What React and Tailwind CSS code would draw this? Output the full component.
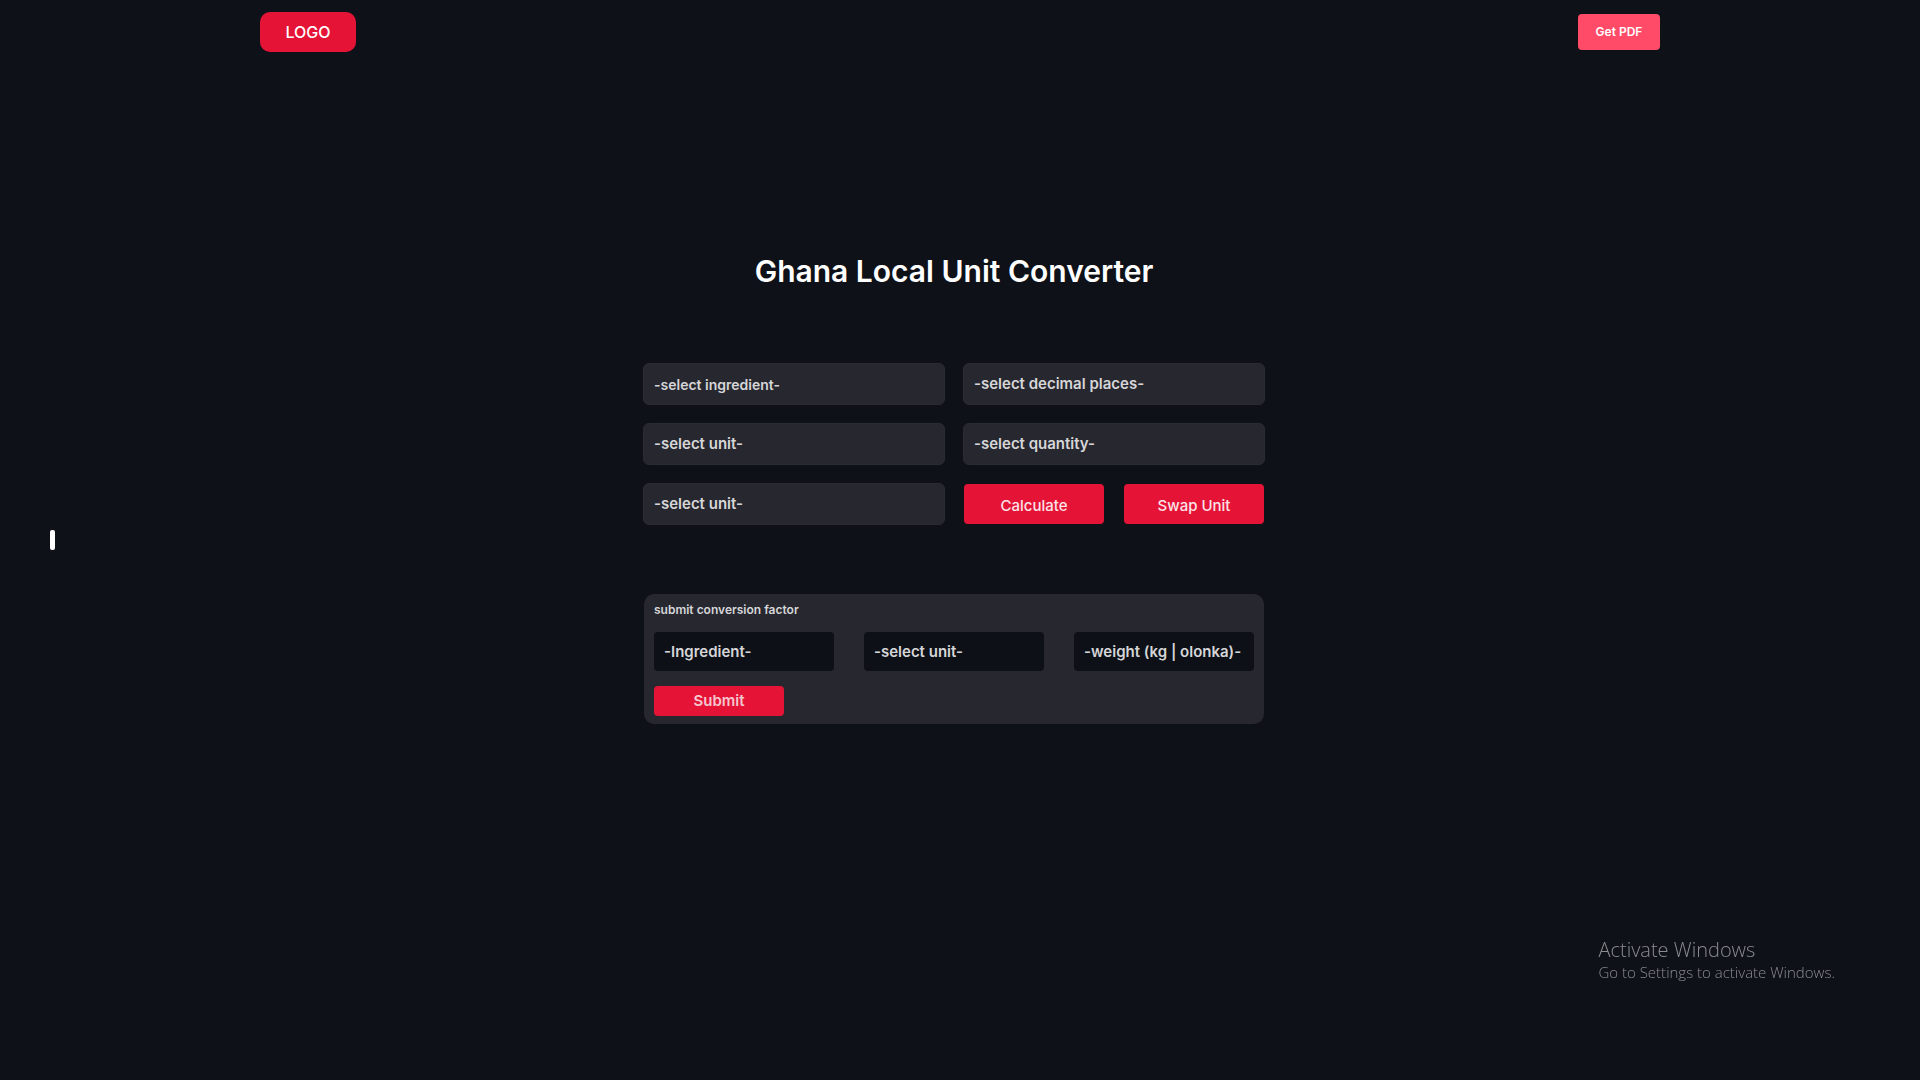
const fieldClass =
  "h-[42px] w-full appearance-none rounded-md border border-[#2b2b33] bg-[#27272f] px-2.5 font-semibold text-[#d6d6d8] outline-none";
const factorClass =
  "h-[39px] min-w-0 appearance-none rounded bg-[#0d1017] px-2.5 text-[15px] font-semibold text-[#d6d6d8] placeholder-[#d6d6d8] outline-none";

function Field({ label, small }) {
  return (
    <select aria-label={label} className={`${fieldClass} ${small ? "pt-px text-[14px]" : "text-[15px]"}`}>
      <option>{label}</option>
    </select>
  );
}

function ActionButton({ children }) {
  return (
    <button type="button" className="h-10 flex-1 rounded bg-[#e51437] pt-1 text-[15px] font-medium text-[#fbe3e7]">
      {children}
    </button>
  );
}

export default function App() {
  return (
    <div className="relative min-h-screen bg-[#0e1118] font-['Inter',sans-serif] text-white">
      <header className="mx-auto flex h-16 w-full max-w-[1400px] items-center justify-between">
        <a href="#" className="flex h-10 w-24 items-center justify-center rounded-[10px] bg-[#e51437] text-base font-medium">
          LOGO
        </a>
        <button type="button" className="h-9 w-[82px] rounded bg-[#ff4a68] text-xs font-semibold">
          Get PDF
        </button>
      </header>

      <main className="flex flex-col items-center pr-3 pt-[183px]">
        <h1 className="text-[30px] font-semibold leading-12">Ghana Local Unit Converter</h1>

        <form className="mt-17 grid w-full max-w-[622px] grid-cols-2 gap-[18px]">
          <Field label="-select ingredient-" small />
          <Field label="-select decimal places-" />
          <Field label="-select unit-" />
          <Field label="-select quantity-" />
          <Field label="-select unit-" />
          <div className="flex items-center gap-5 px-px">
            <ActionButton>Calculate</ActionButton>
            <ActionButton>Swap Unit</ActionButton>
          </div>
        </form>

        <form className="mt-[69px] w-full max-w-[620px] rounded-[10px] bg-[#27272f] px-2.5 pb-2 pt-1.5">
          <h2 className="text-xs font-semibold leading-5 text-[#d6d6d8]">submit conversion factor</h2>
          <div className="mt-3 grid grid-cols-3 gap-[30px]">
            <input type="text" aria-label="Ingredient" placeholder="-Ingredient-" className={factorClass} />
            <select aria-label="Unit" className={`${factorClass} pt-px`}>
              <option>-select unit-</option>
            </select>
            <input type="text" aria-label="Weight" placeholder="-weight (kg | olonka)-" className={factorClass} />
          </div>
          <button type="button" className="mt-[15px] block h-[30px] w-[130px] rounded bg-[#e51437] text-[15px] font-semibold text-[#f5c6ce]">
            Submit
          </button>
        </form>
      </main>

      <div className="fixed left-[50px] top-[530px] h-5 w-[5px] rounded-xs bg-white" />

      <aside className="fixed bottom-[98px] right-[85px] font-['Open_Sans',sans-serif] text-[#8a8c8f]">
        <p className="text-[20px] font-light leading-6">Activate Windows</p>
        <p className="text-[15px] font-light leading-5">Go to Settings to activate Windows.</p>
      </aside>
    </div>
  );
}
